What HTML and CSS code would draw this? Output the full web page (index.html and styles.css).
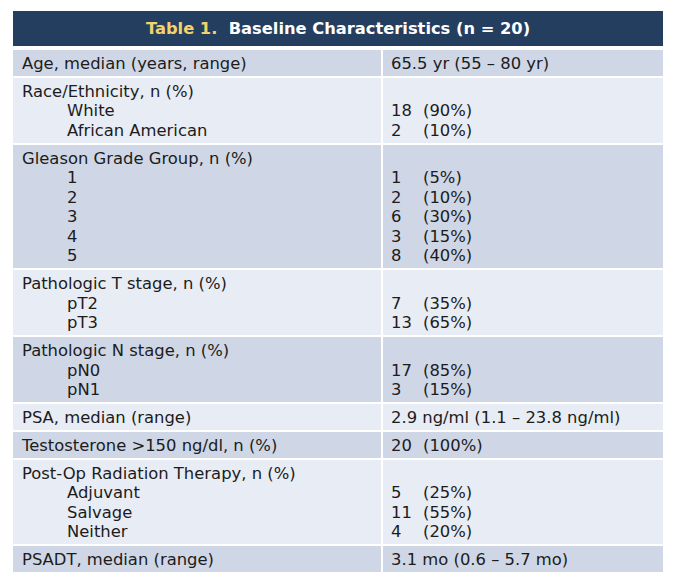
FILE: index.html
```html
<!DOCTYPE html>
<html>
<head>
<meta charset="utf-8">
<link rel="stylesheet" href="styles.css">
</head>
<body>
<div class="tbl">
  <div class="head"><span class="tag">Table 1.</span>&nbsp; Baseline Characteristics (n = 20)</div>

  <div class="c lab dark">Age, median (years, range)</div>
  <div class="c val dark">65.5 yr (55 – 80 yr)</div>

  <div class="c lab light">Race/Ethnicity, n (%)<span class="sub">White</span><span class="sub">African American</span></div>
  <div class="c val light"><br><span class="v"><span class="n">18</span>(90%)</span><span class="v"><span class="n">2</span>(10%)</span></div>

  <div class="c lab dark">Gleason Grade Group, n (%)<span class="sub">1</span><span class="sub">2</span><span class="sub">3</span><span class="sub">4</span><span class="sub">5</span></div>
  <div class="c val dark"><br><span class="v"><span class="n">1</span>(5%)</span><span class="v"><span class="n">2</span>(10%)</span><span class="v"><span class="n">6</span>(30%)</span><span class="v"><span class="n">3</span>(15%)</span><span class="v"><span class="n">8</span>(40%)</span></div>

  <div class="c lab light">Pathologic T stage, n (%)<span class="sub">pT2</span><span class="sub">pT3</span></div>
  <div class="c val light"><br><span class="v"><span class="n">7</span>(35%)</span><span class="v"><span class="n">13</span>(65%)</span></div>

  <div class="c lab dark">Pathologic N stage, n (%)<span class="sub">pN0</span><span class="sub">pN1</span></div>
  <div class="c val dark"><br><span class="v"><span class="n">17</span>(85%)</span><span class="v"><span class="n">3</span>(15%)</span></div>

  <div class="c lab light">PSA, median (range)</div>
  <div class="c val light">2.9 ng/ml (1.1 – 23.8 ng/ml)</div>

  <div class="c lab dark">Testosterone &gt;150 ng/dl, n (%)</div>
  <div class="c val dark"><span class="v"><span class="n">20</span>(100%)</span></div>

  <div class="c lab light">Post-Op Radiation Therapy, n (%)<span class="sub">Adjuvant</span><span class="sub">Salvage</span><span class="sub">Neither</span></div>
  <div class="c val light"><br><span class="v"><span class="n">5</span>(25%)</span><span class="v"><span class="n">11</span>(55%)</span><span class="v"><span class="n">4</span>(20%)</span></div>

  <div class="c lab dark">PSADT, median (range)</div>
  <div class="c val dark">3.1 mo (0.6 – 5.7 mo)</div>
</div>
</body>
</html>
```

FILE: styles.css
```css
html, body {
  margin: 0;
  background: #ffffff;
}
body {
  padding: 11px 12px 0 13px;
  font-family: "DejaVu Sans", Verdana, sans-serif;
  color: #1c1c1c;
}
.tbl {
  display: grid;
  grid-template-columns: 368px 280px;
  column-gap: 2px;
  row-gap: 2px;
  width: 650px;
}
.head {
  grid-column: 1 / 3;
  background: #243e60;
  color: #ffffff;
  font-weight: bold;
  font-size: 16.3px;
  height: 35px;
  line-height: 35px;
  text-align: center;
  margin-bottom: 2px;
}
.tag {
  color: #f4d26c;
}
.c {
  font-size: 16.4px;
  line-height: 19.5px;
  padding: 4px 0 2.4px 0;
}
.lab {
  padding-left: 9px;
}
.val {
  padding-left: 8px;
}
.dark {
  background: #cfd7e6;
}
.light {
  background: #e8ecf4;
}
.sub {
  display: block;
  padding-left: 45px;
}
.v {
  display: block;
}
.n {
  display: inline-block;
  width: 32px;
}
```
